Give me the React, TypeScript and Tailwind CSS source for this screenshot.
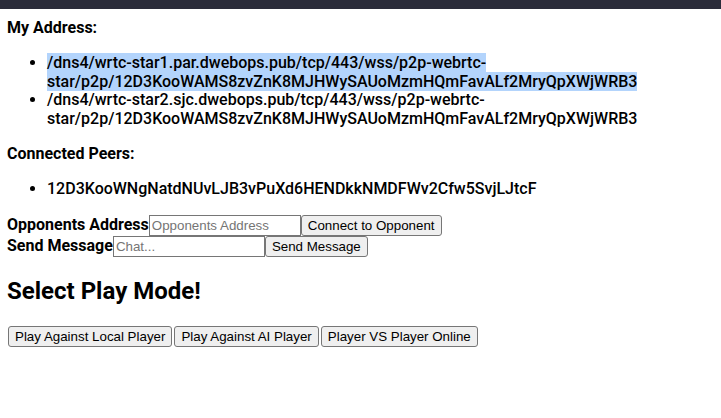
import React from 'react';

const addresses = [
  '/dns4/wrtc-star1.par.dwebops.pub/tcp/443/wss/p2p-webrtc-star/p2p/12D3KooWAMS8zvZnK8MJHWySAUoMzmHQmFavALf2MryQpXWjWRB3',
  '/dns4/wrtc-star2.sjc.dwebops.pub/tcp/443/wss/p2p-webrtc-star/p2p/12D3KooWAMS8zvZnK8MJHWySAUoMzmHQmFavALf2MryQpXWjWRB3',
];

const peers = ['12D3KooWNgNatdNUvLJB3vPuXd6HENDkkNMDFWv2Cfw5SvjLJtcF'];

const btn =
  "inline-block bg-[#efefef] border border-[#767676] rounded-[3px] px-[6px] py-[1px] text-[13.33px] leading-[17px] text-black font-['Liberation_Sans',Arial,sans-serif] align-baseline";
const input =
  "inline-block w-[152px] h-[21px] border border-[#767676] px-[2px] py-[1px] text-[13.33px] text-black placeholder:text-[#757575] font-['Liberation_Sans',Arial,sans-serif] align-baseline bg-white";

export default function App() {
  return (
    <div className="min-h-[418px] bg-white text-black font-['Roboto',Arial,sans-serif] text-[16px] leading-[18.75px]">
      <div className="h-[9px] bg-[#2b2c3a]" />
      <div className="pl-[7px] pr-[8px] pt-[10px]">
        <div className="font-bold">My Address:</div>
        <ul className="list-disc my-[16px] pl-[40px] font-medium">
          {addresses.map((a, i) => (
            <li key={a}>
              {i === 0 ? <span className="bg-[#b3d4fc]">{a}</span> : a}
            </li>
          ))}
        </ul>

        <div className="font-bold">Connected Peers:</div>
        <ul className="list-disc mt-[16px] mb-[17px] pl-[40px] font-medium">
          {peers.map((p) => (
            <li key={p}>{p}</li>
          ))}
        </ul>

        <div>
          <span className="font-bold">Opponents Address</span>
          <input className={input} placeholder="Opponents Address" />
          <button className={btn}>Connect to Opponent</button>
        </div>
        <div>
          <span className="font-bold">Send Message</span>
          <input className={input} placeholder="Chat..." />
          <button className={btn}>Send Message</button>
        </div>

        <h2 className="text-[24px] leading-[28px] font-bold mt-[20px] mb-[21px]">Select Play Mode!</h2>

        <div className="flex gap-[2px] pl-[1px]">
          <button className={btn}>Play Against Local Player</button>
          <button className={btn}>Play Against AI Player</button>
          <button className={btn}>Player VS Player Online</button>
        </div>
      </div>
    </div>
  );
}
